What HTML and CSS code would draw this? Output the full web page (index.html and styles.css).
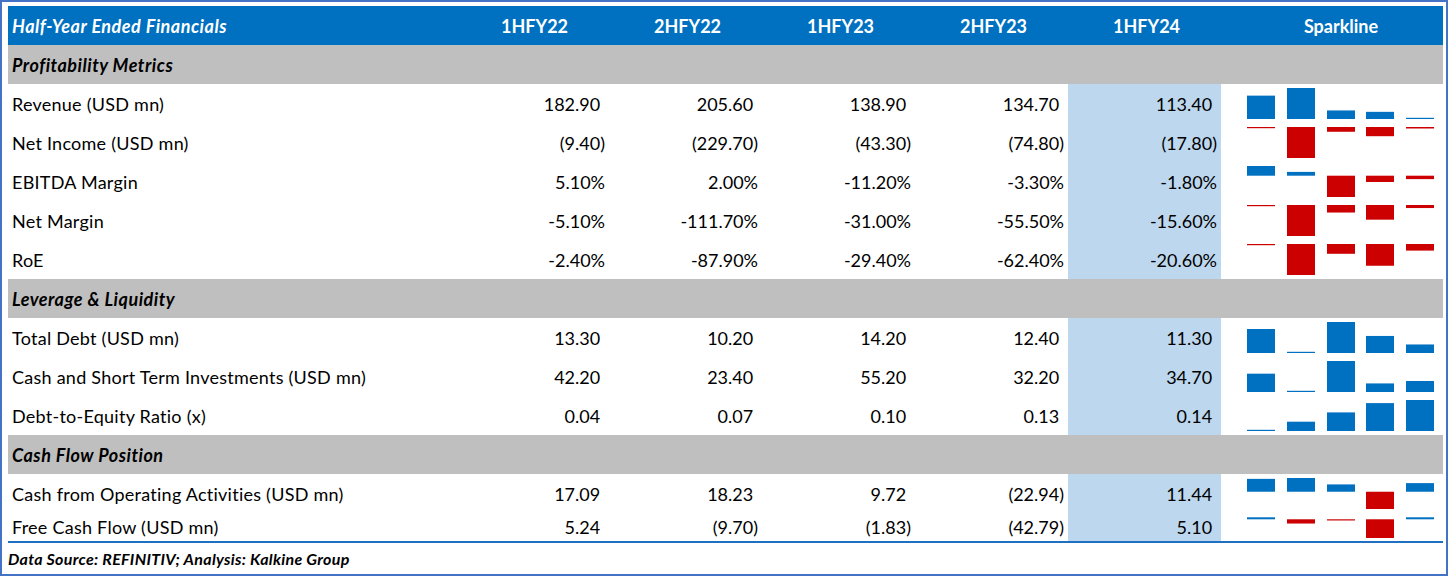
FILE: index.html
```html
<!DOCTYPE html>
<html>
<head>
<meta charset="utf-8">
<link rel="stylesheet" href="styles.css">
</head>
<body>
<div class="frame">
  <div class="sheet">
    <div class="row head">
      <div class="c lbl">Half-Year Ended Financials</div>
      <div class="c h">1HFY22</div>
      <div class="c h">2HFY22</div>
      <div class="c h">1HFY23</div>
      <div class="c h">2HFY23</div>
      <div class="c h">1HFY24</div>
      <div class="c h sp-h">Sparkline</div>
    </div>

    <div class="row sec"><div class="c lbl">Profitability Metrics</div></div>

    <div class="row data">
      <div class="c lbl">Revenue (USD mn)</div>
      <div class="c num">182.90<span class="pad">)</span></div>
      <div class="c num">205.60<span class="pad">)</span></div>
      <div class="c num">138.90<span class="pad">)</span></div>
      <div class="c num">134.70<span class="pad">)</span></div>
      <div class="c num hl">113.40<span class="pad">)</span></div>
      <div class="c spark"><svg width="222" height="39" viewBox="0 0 222 39">
        <rect class="b" x="26" y="11.63" width="28" height="23.37"/>
        <rect class="b" x="66" y="4" width="28" height="31"/>
        <rect class="b" x="106" y="26.43" width="28" height="8.57"/>
        <rect class="b" x="145" y="27.84" width="28" height="7.16"/>
        <rect class="b" x="185" y="33.8" width="28" height="1.2"/>
      </svg></div>
    </div>

    <div class="row data">
      <div class="c lbl">Net Income (USD mn)</div>
      <div class="c num">(9.40)</div>
      <div class="c num">(229.70)</div>
      <div class="c num">(43.30)</div>
      <div class="c num">(74.80)</div>
      <div class="c num hl">(17.80)</div>
      <div class="c spark"><svg width="222" height="39" viewBox="0 0 222 39">
        <rect class="r" x="26" y="4" width="28" height="1.2"/>
        <rect class="r" x="66" y="4" width="28" height="31"/>
        <rect class="r" x="106" y="4" width="28" height="4.77"/>
        <rect class="r" x="145" y="4" width="28" height="9.2"/>
        <rect class="r" x="185" y="4" width="28" height="1.5"/>
      </svg></div>
    </div>

    <div class="row data">
      <div class="c lbl">EBITDA Margin</div>
      <div class="c num">5.10%</div>
      <div class="c num">2.00%</div>
      <div class="c num">-11.20%</div>
      <div class="c num">-3.30%</div>
      <div class="c num hl">-1.80%</div>
      <div class="c spark"><svg width="222" height="39" viewBox="0 0 222 39">
        <rect class="b" x="26" y="4" width="28" height="9.7"/>
        <rect class="b" x="66" y="9.9" width="28" height="3.8"/>
        <rect class="r" x="106" y="13.7" width="28" height="21.3"/>
        <rect class="r" x="145" y="13.7" width="28" height="6.28"/>
        <rect class="r" x="185" y="13.7" width="28" height="3.42"/>
      </svg></div>
    </div>

    <div class="row data">
      <div class="c lbl">Net Margin</div>
      <div class="c num">-5.10%</div>
      <div class="c num">-111.70%</div>
      <div class="c num">-31.00%</div>
      <div class="c num">-55.50%</div>
      <div class="c num hl">-15.60%</div>
      <div class="c spark"><svg width="222" height="39" viewBox="0 0 222 39">
        <rect class="r" x="26" y="4" width="28" height="1.2"/>
        <rect class="r" x="66" y="4" width="28" height="31"/>
        <rect class="r" x="106" y="4" width="28" height="7.53"/>
        <rect class="r" x="145" y="4" width="28" height="14.66"/>
        <rect class="r" x="185" y="4" width="28" height="3.05"/>
      </svg></div>
    </div>

    <div class="row data">
      <div class="c lbl">RoE</div>
      <div class="c num">-2.40%</div>
      <div class="c num">-87.90%</div>
      <div class="c num">-29.40%</div>
      <div class="c num">-62.40%</div>
      <div class="c num hl">-20.60%</div>
      <div class="c spark"><svg width="222" height="39" viewBox="0 0 222 39">
        <rect class="r" x="26" y="4" width="28" height="1.2"/>
        <rect class="r" x="66" y="4" width="28" height="31"/>
        <rect class="r" x="106" y="4" width="28" height="9.79"/>
        <rect class="r" x="145" y="4" width="28" height="21.75"/>
        <rect class="r" x="185" y="4" width="28" height="6.6"/>
      </svg></div>
    </div>

    <div class="row sec"><div class="c lbl">Leverage &amp; Liquidity</div></div>

    <div class="row data">
      <div class="c lbl">Total Debt (USD mn)</div>
      <div class="c num">13.30<span class="pad">)</span></div>
      <div class="c num">10.20<span class="pad">)</span></div>
      <div class="c num">14.20<span class="pad">)</span></div>
      <div class="c num">12.40<span class="pad">)</span></div>
      <div class="c num hl">11.30<span class="pad">)</span></div>
      <div class="c spark"><svg width="222" height="39" viewBox="0 0 222 39">
        <rect class="b" x="26" y="11" width="28" height="24"/>
        <rect class="b" x="66" y="33.8" width="28" height="1.2"/>
        <rect class="b" x="106" y="4" width="28" height="31"/>
        <rect class="b" x="145" y="17.95" width="28" height="17.05"/>
        <rect class="b" x="185" y="26.47" width="28" height="8.53"/>
      </svg></div>
    </div>

    <div class="row data">
      <div class="c lbl">Cash and Short Term Investments (USD mn)</div>
      <div class="c num">42.20<span class="pad">)</span></div>
      <div class="c num">23.40<span class="pad">)</span></div>
      <div class="c num">55.20<span class="pad">)</span></div>
      <div class="c num">32.20<span class="pad">)</span></div>
      <div class="c num hl">34.70<span class="pad">)</span></div>
      <div class="c spark"><svg width="222" height="39" viewBox="0 0 222 39">
        <rect class="b" x="26" y="16.67" width="28" height="18.33"/>
        <rect class="b" x="66" y="33.8" width="28" height="1.2"/>
        <rect class="b" x="106" y="4" width="28" height="31"/>
        <rect class="b" x="145" y="26.42" width="28" height="8.58"/>
        <rect class="b" x="185" y="23.98" width="28" height="11.02"/>
      </svg></div>
    </div>

    <div class="row data">
      <div class="c lbl">Debt-to-Equity Ratio (x)</div>
      <div class="c num">0.04<span class="pad">)</span></div>
      <div class="c num">0.07<span class="pad">)</span></div>
      <div class="c num">0.10<span class="pad">)</span></div>
      <div class="c num">0.13<span class="pad">)</span></div>
      <div class="c num hl">0.14<span class="pad">)</span></div>
      <div class="c spark"><svg width="222" height="39" viewBox="0 0 222 39">
        <rect class="b" x="26" y="33.8" width="28" height="1.2"/>
        <rect class="b" x="66" y="25.7" width="28" height="9.3"/>
        <rect class="b" x="106" y="16.4" width="28" height="18.6"/>
        <rect class="b" x="145" y="7.1" width="28" height="27.9"/>
        <rect class="b" x="185" y="4" width="28" height="31"/>
      </svg></div>
    </div>

    <div class="row sec"><div class="c lbl">Cash Flow Position</div></div>

    <div class="row data">
      <div class="c lbl">Cash from Operating Activities (USD mn)</div>
      <div class="c num">17.09<span class="pad">)</span></div>
      <div class="c num">18.23<span class="pad">)</span></div>
      <div class="c num">9.72<span class="pad">)</span></div>
      <div class="c num">(22.94)</div>
      <div class="c num hl">11.44<span class="pad">)</span></div>
      <div class="c spark"><svg width="222" height="39" viewBox="0 0 222 39">
        <rect class="b" x="26" y="4.86" width="28" height="12.87"/>
        <rect class="b" x="66" y="4" width="28" height="13.73"/>
        <rect class="b" x="106" y="10.41" width="28" height="7.32"/>
        <rect class="r" x="145" y="17.73" width="28" height="17.27"/>
        <rect class="b" x="185" y="9.12" width="28" height="8.61"/>
      </svg></div>
    </div>

    <div class="row data short">
      <div class="c lbl">Free Cash Flow (USD mn)</div>
      <div class="c num">5.24<span class="pad">)</span></div>
      <div class="c num">(9.70)</div>
      <div class="c num">(1.83)</div>
      <div class="c num">(42.79)</div>
      <div class="c num hl">5.10<span class="pad">)</span></div>
      <div class="c spark"><svg width="222" height="28" viewBox="0 0 222 28">
        <rect class="b" x="26" y="4.3" width="28" height="2"/>
        <rect class="r" x="66" y="6.29" width="28" height="4.24"/>
        <rect class="r" x="106" y="6.29" width="28" height="1.2"/>
        <rect class="r" x="145" y="6.29" width="28" height="18.71"/>
        <rect class="b" x="185" y="4.3" width="28" height="2"/>
      </svg></div>
    </div>
  </div>
  <div class="source">Data Source: REFINITIV; Analysis: Kalkine Group</div>
</div>
</body>
</html>
```

FILE: styles.css
```css
html, body {
  margin: 0;
  padding: 0;
  background: #ffffff;
}

.frame {
  box-sizing: border-box;
  width: 1448px;
  height: 576px;
  border: 2px solid #4472c4;
  padding: 4px 3px 0 6px;
  font-family: Lato, "Open Sans", "Liberation Sans", sans-serif;
  font-size: 18px;
  color: #000;
  display: flex;
  flex-direction: column;
}

.sheet {
  width: 1435px;
  border-bottom: 2px solid #1f70c1;
}

.row {
  display: grid;
  grid-template-columns: 448px 153px 153px 153px 153px 153px 222px;
  height: 39px;
}

.row.short {
  height: 28px;
}

.c {
  display: flex;
  align-items: center;
  white-space: nowrap;
}

.lbl {
  padding-left: 4px;
  letter-spacing: 0.25px;
}

.head {
  background: #0070c0;
  color: #fff;
  font-weight: 700;
}

.head .lbl {
  font-style: italic;
  letter-spacing: 0.5px;
}

.h {
  justify-content: center;
  padding-left: 4px;
}

.sp-h {
  padding-left: 18px;
}

.sec {
  background: #bfbfbf;
  font-weight: 700;
  font-style: italic;
}

.sec .lbl {
  grid-column: 1 / -1;
  letter-spacing: 0.5px;
}

.num {
  justify-content: flex-end;
  padding-right: 4px;
}

.pad {
  visibility: hidden;
}

.hl {
  background: #bdd7ee;
}

.spark svg {
  display: block;
}

.b {
  fill: #0070c0;
}

.r {
  fill: #cc0000;
}

.source {
  flex: 1;
  display: flex;
  align-items: center;
  padding-left: 0;
  font-weight: 700;
  font-style: italic;
  font-size: 16px;
  letter-spacing: 0.3px;
}
```
